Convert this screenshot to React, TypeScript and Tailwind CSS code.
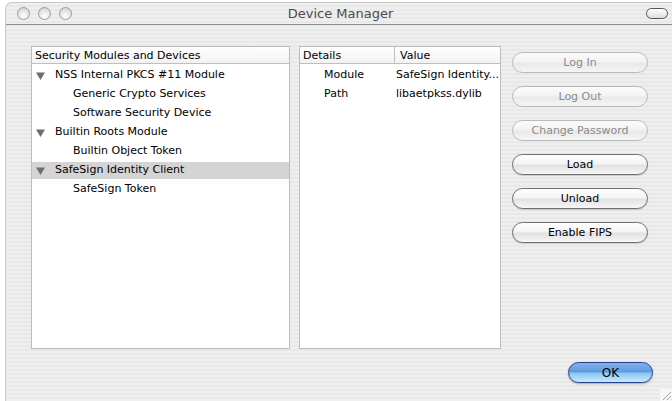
import React from 'react';

const FONT = "font-['DejaVu_Sans',sans-serif]";

interface TreeRow {
  label: string;
  depth: 0 | 1;
  selected?: boolean;
}

const TREE: TreeRow[] = [
  { label: 'NSS Internal PKCS #11 Module', depth: 0 },
  { label: 'Generic Crypto Services', depth: 1 },
  { label: 'Software Security Device', depth: 1 },
  { label: 'Builtin Roots Module', depth: 0 },
  { label: 'Builtin Object Token', depth: 1 },
  { label: 'SafeSign Identity Client', depth: 0, selected: true },
  { label: 'SafeSign Token', depth: 1 },
];

const DETAILS = [
  { key: 'Module', value: 'SafeSign Identity...' },
  { key: 'Path', value: 'libaetpkss.dylib' },
];

const BUTTONS = [
  { label: 'Log In', enabled: false },
  { label: 'Log Out', enabled: false },
  { label: 'Change Password', enabled: false },
  { label: 'Load', enabled: true },
  { label: 'Unload', enabled: true },
  { label: 'Enable FIPS', enabled: true },
];

function Disclosure() {
  return (
    <svg width="9" height="8" viewBox="0 0 9 8" className="shrink-0">
      <path d="M0 0.5 L9 0.5 L4.5 8 Z" fill="#6e6e6e" />
    </svg>
  );
}

function TrafficLight() {
  return (
    <div className="w-[13px] h-[13px] rounded-full border border-[#9c9c9c] bg-[radial-gradient(circle_at_50%_75%,#ffffff_0%,#e4e4e4_55%,#c9c9c9_100%)]" />
  );
}

function AquaButton({ label, enabled }: { label: string; enabled: boolean }) {
  return (
    <div
      className={
        enabled
          ? 'h-[21px] w-[136px] rounded-full border border-[#6f6f6f] bg-[linear-gradient(#ffffff,#f4f4f4_45%,#e2e2e2_55%,#f6f6f6)] flex items-center justify-center pt-[1px] text-[11px] text-black shadow-[0_1px_1px_rgba(0,0,0,0.15)]'
          : 'h-[21px] w-[136px] rounded-full border border-[#b9b9b9] bg-[linear-gradient(#fbfbfb,#f3f3f3_45%,#e9e9e9_55%,#f5f5f5)] flex items-center justify-center pt-[1px] text-[11px] text-[#8a8a8a]'
      }
    >
      {label}
    </div>
  );
}

export default function App() {
  return (
    <div className={`w-[672px] h-[401px] bg-white overflow-hidden ${FONT}`}>
      <div className="ml-[5px] mt-[2px] h-[399px] rounded-tl-[7px] border-l border-t border-[#c8c8c8] bg-[repeating-linear-gradient(180deg,#efefef_0px,#efefef_2px,#e8e8e8_2px,#e8e8e8_4px)] flex flex-col relative">
        {/* title bar */}
        <div className="h-[22px] border-b border-[#8e8e8e] flex items-center pl-[11px] pr-[4px]">
          <div className="flex gap-[8px]">
            <TrafficLight />
            <TrafficLight />
            <TrafficLight />
          </div>
          <div className="flex-1 text-center text-[13px] text-[#4b4b4b] pr-[37px]">Device Manager</div>
          <div className="w-[22px] h-[11px] rounded-full border border-[#555] bg-[linear-gradient(#ffffff,#dcdcdc)]" />
        </div>

        {/* body */}
        <div className="flex pl-[25px] pt-[21px]">
          {/* tree */}
          <div className="w-[259px] h-[303px] border border-[#bcbcbc] bg-white text-[11px] text-black">
            <div className="h-[17px] border-b border-[#bfbfbf] flex items-center pl-[3px] pt-[2px] bg-[linear-gradient(#ffffff,#f2f2f2)]">
              Security Modules and Devices
            </div>
            <div className="pt-[2px]">
              {TREE.map((row) => (
                <div key={row.label} className="h-[19px] py-[1px]">
                  <div
                    className={`h-[17px] flex items-center ${row.selected ? 'bg-[#d4d4d4]' : ''} ${
                      row.depth === 0 ? 'pl-[4px]' : 'pl-[41px]'
                    }`}
                  >
                    {row.depth === 0 && (
                      <>
                        <Disclosure />
                        <span className="ml-[10px]">{row.label}</span>
                      </>
                    )}
                    {row.depth === 1 && <span>{row.label}</span>}
                  </div>
                </div>
              ))}
            </div>
          </div>

          {/* details */}
          <div className="ml-[9px] w-[202px] h-[303px] border border-[#bcbcbc] bg-white text-[11px] text-black">
            <div className="h-[17px] border-b border-[#bfbfbf] flex bg-[linear-gradient(#ffffff,#f2f2f2)]">
              <div className="w-[95px] border-r border-[#bfbfbf] flex items-center pl-[3px] pt-[2px]">Details</div>
              <div className="flex-1 flex items-center pl-[5px] pt-[2px]">Value</div>
            </div>
            <div className="pt-[2px]">
              {DETAILS.map((d) => (
                <div key={d.key} className="h-[19px] flex items-center">
                  <div className="w-[96px] pl-[24px]">{d.key}</div>
                  <div className="flex-1 whitespace-nowrap">{d.value}</div>
                </div>
              ))}
            </div>
          </div>

          {/* buttons */}
          <div className="ml-[11px] pt-[6px] flex flex-col gap-[13px]">
            {BUTTONS.map((b) => (
              <AquaButton key={b.label} label={b.label} enabled={b.enabled} />
            ))}
          </div>
        </div>

        {/* OK */}
        <div className="flex justify-end pr-[19px] mt-[13px]">
          <div className="h-[21px] w-[85px] rounded-full border border-[#2c3f8a] bg-[linear-gradient(#7fb3ea,#5c9be0_45%,#8fc6f4_55%,#c4ecff)] flex items-center justify-center pt-[1px] text-[12px] text-black shadow-[0_1px_2px_rgba(0,0,0,0.3)]">
            OK
          </div>
        </div>

        {/* resize grip */}
        <svg width="12" height="12" viewBox="0 0 12 12" className="absolute right-0 bottom-0">
          <rect x="0" y="0" width="12" height="12" fill="#f6f6f6" />
          <path d="M11 3 L3 11 M11 7 L7 11 M11 10.5 L10.5 11" stroke="#9a9a9a" strokeWidth="1" />
          <path d="M12 4 L4 12 M12 8 L8 12" stroke="#ffffff" strokeWidth="1" />
        </svg>
      </div>
    </div>
  );
}
